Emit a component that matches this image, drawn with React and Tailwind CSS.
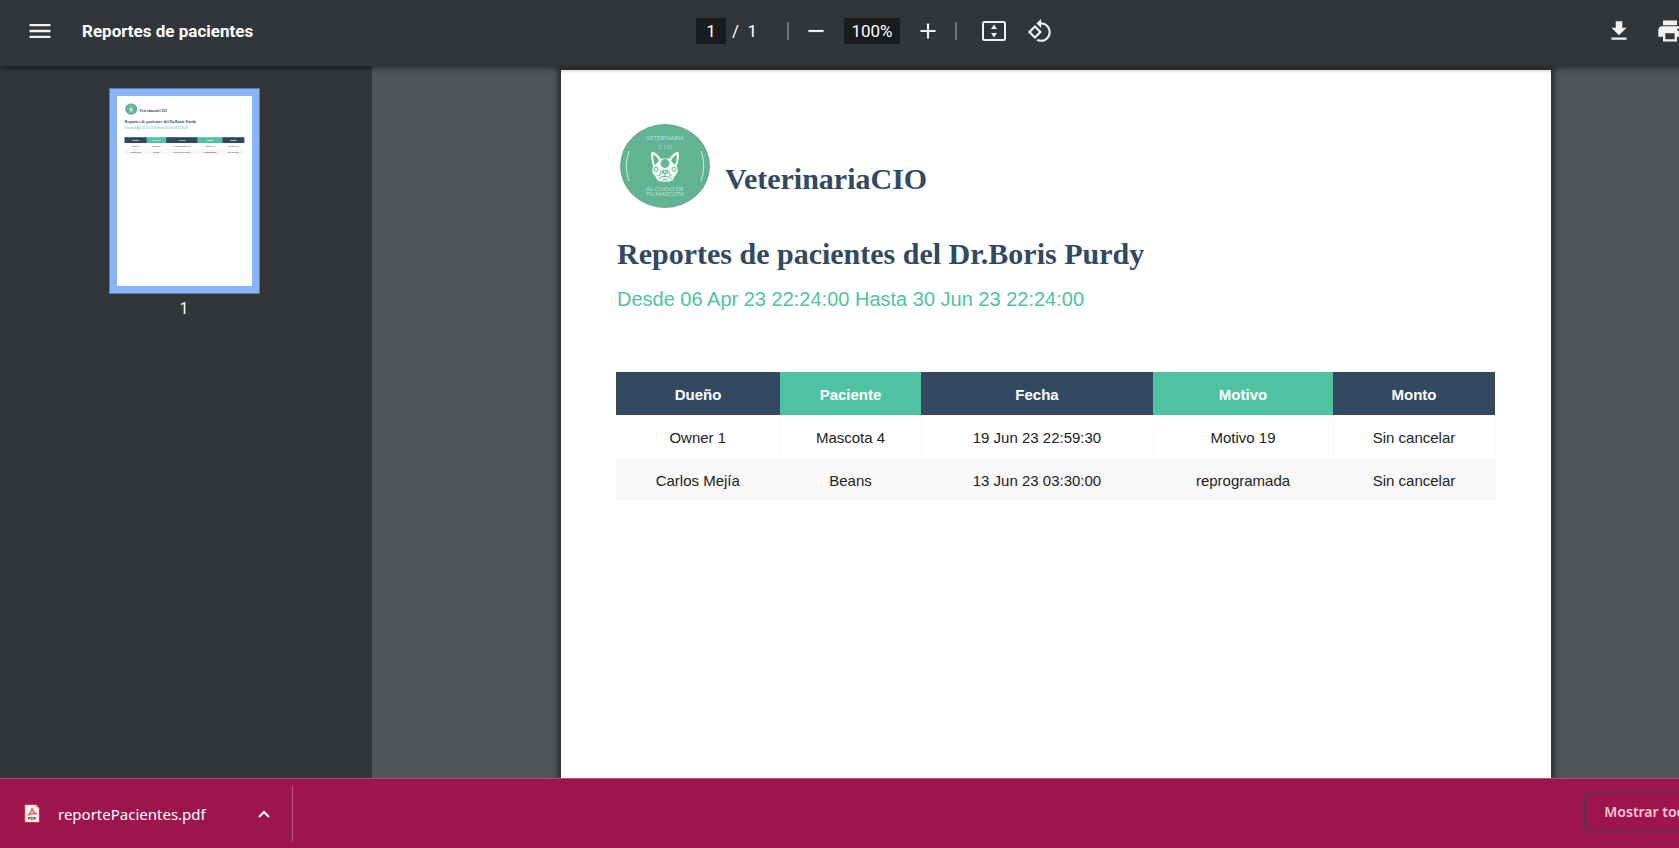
import React from "react";
import { MdMenu, MdRemove, MdAdd, MdRotate90DegreesCcw, MdPrint, MdGetApp } from "react-icons/md";

const rows = [
  ["Owner 1", "Mascota 4", "19 Jun 23 22:59:30", "Motivo 19", "Sin cancelar"],
  ["Carlos Mejía", "Beans", "13 Jun 23 03:30:00", "reprogramada", "Sin cancelar"],
];

const columns = [
  { title: "Dueño", tone: "bg-[#324960]", col: "w-[164px]", x: 55, w: 164, fill: "#324960" },
  { title: "Paciente", tone: "bg-[#4FC3A1]", col: "w-[141px]", x: 219, w: 141, fill: "#4FC3A1" },
  { title: "Fecha", tone: "bg-[#324960]", col: "w-[232px]", x: 360, w: 232, fill: "#324960" },
  { title: "Motivo", tone: "bg-[#4FC3A1]", col: "w-[180px]", x: 592, w: 180, fill: "#4FC3A1" },
  { title: "Monto", tone: "bg-[#324960]", col: "w-[162px]", x: 772, w: 162, fill: "#324960" },
];

function LogoArt() {
  return (
    <g>
      <ellipse cx="45" cy="42" rx="44.5" ry="41.5" fill="#60b393" stroke="#6f9585" strokeWidth="0.800" />
      <g fill="#bfe0d3" fontFamily="Lato, 'Liberation Sans', sans-serif" textAnchor="middle" fontSize="6">
        <text x="45" y="16">VETERINARIA</text>
        <text x="45" y="25">C  I  O</text>
        <text x="45" y="66.500">AL CUIDO DE</text>
        <text x="45" y="71.500">TU MASCOTA</text>
      </g>
      <g fill="none" stroke="#d3ebe1" strokeWidth="1">
        <path d="M9 27 Q3.500 42 9 57" />
        <path d="M81 27 Q86.500 42 81 57" />
      </g>
      <path
        d="M31.200 29 C31.200 27.600 32.500 27.500 34 28.300 C37.500 30.200 39.500 32 40.300 34.500 H49.700 C50.500 32 52.500 30.200 56 28.300 C57.500 27.500 58.800 27.600 58.800 29 C59.200 33.500 58.400 38 56.800 42 Q58.800 47 56.500 50.500 L54.500 52.500 L52.500 56.500 Q48.500 58 45 57.700 Q41.500 58 37.500 56.500 L35.500 52.500 L33.500 50.500 Q31.200 47 33.200 42 C31.600 38 30.800 33.500 31.200 29 Z"
        fill="#f1f8f5"
      />
      <g fill="#60b393">
        <path d="M33.300 30.600 C36 32 38 34.300 38.900 37 L35 41 C33.500 37.500 33 34 33.300 30.600 Z" />
        <path d="M56.700 30.600 C54 32 52 34.300 51.100 37 L55 41 C56.500 37.500 57 34 56.700 30.600 Z" />
        <circle cx="45" cy="39.500" r="4.400" />
        <path d="M42 46 H48 V48.500 L46 50 H44 L42 48.500 Z" />
      </g>
      <path d="M43 46.900 H47 L45.800 48.500 H44.200 Z" fill="#f1f8f5" />
      <g fill="none" stroke="#60b393" strokeWidth="0.900">
        <circle cx="36" cy="45.300" r="2" />
        <circle cx="54" cy="45.300" r="2" />
        <path d="M45 50 V52.500 L40.500 53 L38.700 55.500 M45 52.500 L49.500 53 L51.300 55.500 M40.800 47 V50.500 L38 52 M49.200 47 V50.500 L52 52 M42.500 56 Q45 54.800 47.500 56" />
      </g>
    </g>
  );
}

function ThumbnailArt() {
  return (
    <svg viewBox="0 0 990 1393" className="block w-full" aria-hidden="true">
      <rect width="990" height="1393" fill="#fff" />
      <g transform="translate(59 54)">
        <LogoArt />
      </g>
      <g fontFamily="'Liberation Serif', serif" fontWeight="700" fontSize="30" fill="#324960">
        <text x="164" y="119">VeterinariaCIO</text>
        <text x="56" y="197">Reportes de pacientes del Dr.Boris Purdy</text>
      </g>
      <g fontFamily="'Liberation Sans', sans-serif">
        <text x="56" y="242" fontSize="20" fill="#4FC3A1">Desde 06 Apr 23 22:24:00 Hasta 30 Jun 23 22:24:00</text>
        <rect x="55" y="388" width="879" height="43" fill="#f8f8f8" />
        {columns.map((c, i) => (
          <g key={c.title} textAnchor="middle" fontSize="15" fill="#222">
            <rect x={c.x} y="302" width={c.w} height="43" fill={c.fill} />
            <text x={c.x + c.w / 2} y="330" fill="#fff" fontWeight="700">{c.title}</text>
            <text x={c.x + c.w / 2} y="373">{rows[0][i]}</text>
            <text x={c.x + c.w / 2} y="416">{rows[1][i]}</text>
          </g>
        ))}
      </g>
    </svg>
  );
}

function IconButton({ label, children }) {
  return (
    <button type="button" aria-label={label} className="flex size-10 shrink-0 items-center justify-center rounded-full text-[#f1f1f1] hover:bg-white/10">
      {children}
    </button>
  );
}

function Separator() {
  return <span className="mx-[7px] h-[18px] w-[2px] shrink-0 bg-[#707376]" />;
}

function Toolbar() {
  return (
    <header className="relative z-10 flex h-[66px] shrink-0 items-center bg-[#323639] pb-1 font-['Roboto','Liberation_Sans',sans-serif] text-white shadow-[0_2px_6px_rgba(0,0,0,0.5)]">
      <div className="flex flex-1 items-center gap-[22px] pl-5">
        <IconButton label="Menú"><MdMenu size={28} /></IconButton>
        <h1 className="text-[17px] leading-6 font-bold">Reportes de pacientes</h1>
      </div>
      <div className="flex items-center pl-[46px] text-[17px] leading-6">
        <input aria-label="Página" defaultValue="1" className="h-[26px] w-[30px] bg-[#191b1c] text-center outline-none" />
        <span className="w-[54px] pl-[6px] whitespace-pre">/  1</span>
        <Separator />
        <IconButton label="Alejar"><MdRemove size={26} /></IconButton>
        <input aria-label="Zoom" defaultValue="100%" className="mx-2 h-[26px] w-14 bg-[#191b1c] text-center outline-none" />
        <IconButton label="Acercar"><MdAdd size={26} /></IconButton>
        <Separator />
        <div className="flex gap-[6px] pl-[10px]">
          <IconButton label="Ajustar a la página">
            <svg width="24" height="20" viewBox="0 0 24 20" aria-hidden="true">
              <rect x="1" y="1" width="22" height="18" rx="1.500" fill="none" stroke="currentColor" strokeWidth="2" />
              <path d="M12 3.500 L15 8 H9 Z M12 16.500 L15 12 H9 Z" fill="currentColor" />
            </svg>
          </IconButton>
          <IconButton label="Girar"><MdRotate90DegreesCcw size={26} /></IconButton>
        </div>
      </div>
      <div className="flex flex-1 justify-end gap-[11px] pr-[50px]">
        <IconButton label="Descargar"><MdGetApp size={26} /></IconButton>
        <IconButton label="Imprimir"><MdPrint size={28} /></IconButton>
      </div>
    </header>
  );
}

function Report() {
  return (
    <article className="w-[990px] shrink-0 bg-white pt-[54px] pr-14 pl-[55px] shadow-[0_0_6px_3px_rgba(0,0,0,0.5)]">
      <div className="flex items-end gap-[15px] pl-1">
        <svg width="90" height="84" viewBox="0 0 90 84" role="img" aria-label="Veterinaria CIO">
          <LogoArt />
        </svg>
        <p className="pb-[11px] font-['Liberation_Serif',serif] text-[30px] leading-9 font-bold text-[#324960]">VeterinariaCIO</p>
      </div>
      <h2 className="pt-7 pl-px font-['Liberation_Serif',serif] text-[30px] leading-9 font-bold text-[#324960]">
        Reportes de pacientes del Dr.Boris Purdy
      </h2>
      <p className="pt-[15px] pl-px font-['Liberation_Sans',sans-serif] text-[20px] leading-6 text-[#4FC3A1]">
        Desde 06 Apr 23 22:24:00 Hasta 30 Jun 23 22:24:00
      </p>
      <table className="mt-[61px] w-full table-fixed border-collapse font-['Liberation_Sans',sans-serif] text-[15px] leading-5 text-[#222]">
        <thead>
          <tr className="h-[43px]">
            {columns.map((c) => (
              <th key={c.title} scope="col" className={`${c.col} ${c.tone} p-0 pt-[2px] text-center font-bold text-white`}>{c.title}</th>
            ))}
          </tr>
        </thead>
        <tbody>
          {rows.map((r) => (
            <tr key={r[0]} className="h-[43px] even:bg-[#f8f8f8]">
              {r.map((v, i) => (
                <td key={i} className="border-r border-[#f8f8f8] p-0 pt-[2px] text-center">{v}</td>
              ))}
            </tr>
          ))}
        </tbody>
      </table>
    </article>
  );
}

function DownloadBar() {
  return (
    <footer className="relative z-10 flex h-[70px] shrink-0 items-center border-t border-[#b04a76] bg-[#9e144d] font-['Noto_Sans','Open_Sans',sans-serif] text-white">
      <div className="flex h-[55px] items-center border-r border-[#bb5b84] pr-[14px] pl-6">
        <svg width="16" height="19" viewBox="0 0 15 18" aria-hidden="true">
          <path d="M1.500 0.500 H11 L14.500 4 V16.500 Q14.500 17.500 13.500 17.500 H1.500 Q0.500 17.500 0.500 16.500 V1.500 Q0.500 0.500 1.500 0.500 Z" fill="#fbf6f5" stroke="#e5252a" />
          <path d="M11 0.500 V4 H14.500 Z" fill="#f3b5b3" />
          <path d="M3.500 10.500 Q7 8.500 7.500 3.500 Q8 8 12 9.500 Q7.500 8.500 3.500 10.500 Z" fill="none" stroke="#f2554f" strokeWidth="1.300" />
          <text x="7.500" y="15.500" textAnchor="middle" fontSize="4" fontWeight="700" fontFamily="'Liberation Sans', sans-serif" fill="#222">PDF</text>
        </svg>
        <a href="#reporte" className="w-[210px] pl-[18px] text-[15px] leading-6">reportePacientes.pdf</a>
        <button type="button" aria-label="Opciones de descarga" className="flex h-8 w-7 items-center justify-center">
          <svg width="12" height="8" viewBox="0 0 12 8" fill="none" stroke="currentColor" strokeWidth="2" aria-hidden="true">
            <path d="M1 7 L6 2 L11 7" />
          </svg>
        </button>
      </div>
      <button type="button" className="mr-[26px] mb-1 ml-auto h-10 rounded-[5px] border border-[#3c4043] px-[19px] text-[14px] leading-5 font-semibold whitespace-nowrap text-[#f8c9d4]">
        Mostrar todo
      </button>
    </footer>
  );
}

export default function App() {
  return (
    <div className="h-screen overflow-hidden bg-[#525659]">
      <div className="flex h-full w-[calc(100%+61px)] flex-col">
        <Toolbar />
        <div className="flex min-h-0 flex-1">
          <aside className="flex w-[372px] shrink-0 flex-col items-center bg-[#323639] pt-[22px] pr-1 text-white">
            <button type="button" aria-label="Página 1" className="w-[151px] border border-[#5c7bb0] bg-[#8ab4f8] p-[7px]">
              <ThumbnailArt />
            </button>
            <span className="pt-[3px] font-['Roboto',sans-serif] text-[16px] leading-6">1</span>
          </aside>
          <main className="flex min-w-0 flex-1 justify-center overflow-hidden pt-1">
            <Report />
          </main>
        </div>
        <DownloadBar />
      </div>
    </div>
  );
}
